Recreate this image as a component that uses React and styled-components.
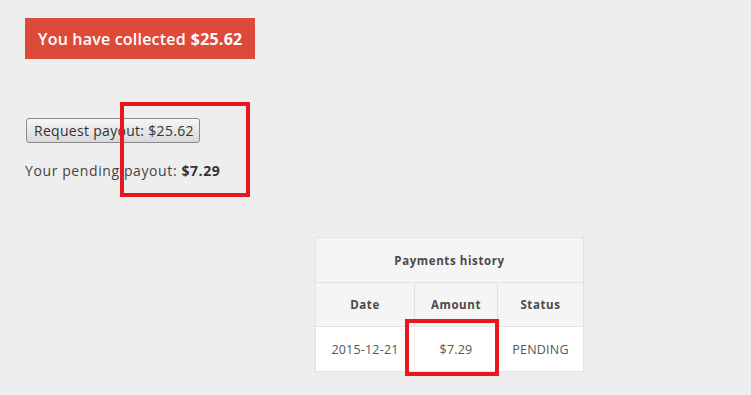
import React from "react";
import styled, { createGlobalStyle } from "styled-components";

const GlobalStyle = createGlobalStyle`
  html, body {
    margin: 0;
    padding: 0;
    background: #eeeeee;
    font-family: 'Open Sans', 'Liberation Sans', sans-serif;
  }
`;

const Page = styled.div`
  position: relative;
  width: 751px;
  height: 395px;
  padding: 18px 0 0 25px;
  box-sizing: border-box;
  overflow: hidden;
`;

const Banner = styled.div`
  display: inline-flex;
  align-items: center;
  height: 41px;
  width: 230px;
  box-sizing: border-box;
  padding: 0 13px;
  background: #dd4a3a;
  color: #fff;
  font-size: 16px;
  font-weight: 600;
  letter-spacing: 0.2px;
  white-space: nowrap;

  strong {
    font-weight: 700;
    margin-left: 5px;
  }
`;

const Button = styled.button`
  display: block;
  margin: 59px 0 0 1px;
  height: 25px;
  padding: 0 5px 0 7px;
  border: 1px solid #8a8a8a;
  border-radius: 3px;
  background: linear-gradient(#f6f6f6, #d9d9d9);
  font-family: 'Open Sans', 'Liberation Sans', sans-serif;
  font-size: 14px;
  letter-spacing: 0.3px;
  color: #333;
`;

const Pending = styled.p`
  margin: 18px 0 0;
  font-size: 14px;
  color: #444;
  letter-spacing: 0.6px;

  strong {
    font-weight: 700;
    color: #333;
  }
`;

const Table = styled.table`
  margin: 57px 0 0 290px;
  width: 269px;
  border-collapse: collapse;
  font-size: 12px;
  color: #555;
  background: #fff;
  border: 1px solid #e2e2e2;
`;

const Th = styled.th`
  height: ${(p) => p.h || 43}px;
  padding: 0;
  background: #f5f5f5;
  border: 1px solid #e2e2e2;
  font-weight: 700;
  font-size: 11.5px;
  letter-spacing: 0.6px;
  color: #4a4a4a;
  text-align: center;
  width: ${(p) => p.w || "auto"};
`;

const Td = styled.td`
  height: 44px;
  padding: 0;
  border-right: 1px solid #ececec;
  text-align: center;
  font-size: 12.5px;
  letter-spacing: 0.2px;
  color: #555;
  &:last-child {
    border-right: none;
  }
`;

const Highlight = styled.div`
  position: absolute;
  left: ${(p) => p.x}px;
  top: ${(p) => p.y}px;
  width: ${(p) => p.w}px;
  height: ${(p) => p.h}px;
  border: 4px solid #e8161e;
  box-sizing: border-box;
  pointer-events: none;
`;

export default function App() {
  return (
    <Page>
      <GlobalStyle />
      <Banner>
        You have collected<strong>$25.62</strong>
      </Banner>
      <Button>Request payout: $25.62</Button>
      <Pending>
        Your pending payout: <strong>$7.29</strong>
      </Pending>
      <Table>
        <thead>
          <tr>
            <Th colSpan={3} h={44}>Payments history</Th>
          </tr>
          <tr>
            <Th w="98px">Date</Th>
            <Th w="82px">Amount</Th>
            <Th>Status</Th>
          </tr>
        </thead>
        <tbody>
          <tr>
            <Td>2015-12-21</Td>
            <Td>$7.29</Td>
            <Td>PENDING</Td>
          </tr>
        </tbody>
      </Table>
      <Highlight x={120} y={102} w={130} h={95} />
      <Highlight x={405} y={319} w={94} h={57} />
    </Page>
  );
}
